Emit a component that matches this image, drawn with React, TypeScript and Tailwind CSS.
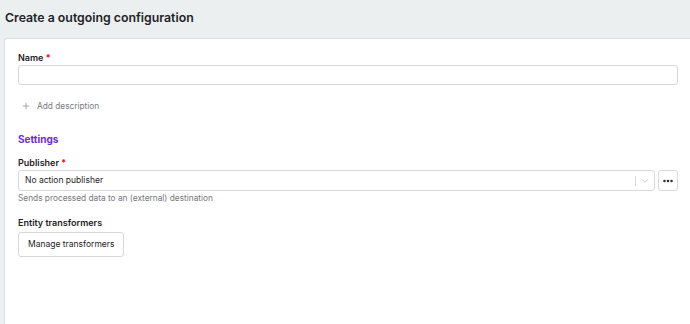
import { Plus, ChevronDown, MoreHorizontal } from "lucide-react";

export default function App() {
  return (
    <div
      className="w-[690px] h-[324px] overflow-hidden bg-[#eceff0] flex flex-col text-[#1f2328]"
      style={{ fontFamily: "Inter, 'Noto Sans', sans-serif" }}
    >
      {/* Titel */}
      <div className="h-[38px] flex items-center px-[5px] pb-[1px] shrink-0">
        <h1 className="text-[12.3px] font-semibold">
          Create a outgoing configuration
        </h1>
      </div>

      {/* Karte */}
      <div className="flex-1 ml-[4px] bg-white border-l border-t border-[#dcdfe1] rounded-tl-[4px] px-[13px] pt-[13px]">
        <label className="block text-[9px] font-semibold leading-[12px]">
          Name <span className="text-red-600">*</span>
        </label>
        <input
          type="text"
          className="mt-[1px] block w-[660px] h-[20px] rounded-[3px] border border-[#d6d8da] bg-white"
        />

        <div className="mt-[13px] flex items-center gap-[6px] pl-[3px] text-[8.3px] text-[#777b80] h-[16px]">
          <Plus size={10} strokeWidth={1.5} />
          <span>Add description</span>
        </div>

        <div className="mt-[18px] text-[10px] font-bold text-[#6c2bd9] leading-[14px]">
          Settings
        </div>

        <label className="mt-[11px] block text-[9px] font-semibold leading-[12px]">
          Publisher <span className="text-red-600">*</span>
        </label>
        <div className="mt-[1px] flex gap-[3px] w-[660px]">
          <div className="flex-1 h-[21px] rounded-[3px] border border-[#d6d8da] flex items-center">
            <span className="flex-1 pl-[6px] text-[8.5px]">No action publisher</span>
            <span className="w-px h-[10px] bg-[#d6d8da]" />
            <span className="w-[18px] flex justify-center text-[#a5a8ab]">
              <ChevronDown size={10} strokeWidth={1.5} />
            </span>
          </div>
          <button className="w-[20px] h-[21px] rounded-[3px] border border-[#d6d8da] flex items-center justify-center">
            <MoreHorizontal size={12} strokeWidth={3} />
          </button>
        </div>
        <div className="mt-[1px] text-[8.3px] text-[#74787c] leading-[12px]">
          Sends processed data to an (external) destination
        </div>

        <label className="mt-[13px] block text-[9px] font-semibold leading-[12px]">
          Entity transformers
        </label>
        <button className="mt-0 h-[25px] px-[9px] rounded-[3px] border border-[#d6d8da] text-[8.5px] bg-white">
          Manage transformers
        </button>
      </div>
    </div>
  );
}
